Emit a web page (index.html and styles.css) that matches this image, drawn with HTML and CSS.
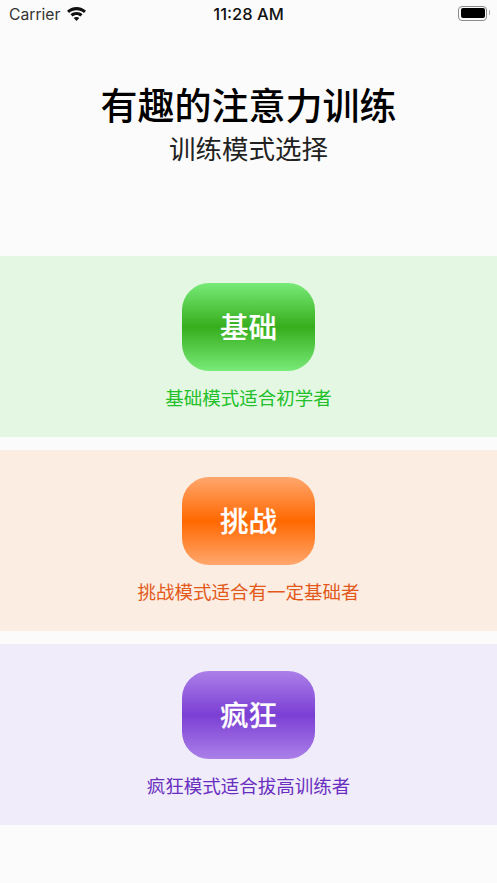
FILE: index.html
```html
<!DOCTYPE html>
<html lang="zh-CN">
<head>
  <meta charset="UTF-8" />
  <meta name="viewport" content="width=device-width, initial-scale=1.0" />
  <title>有趣的注意力训练</title>
  <link rel="stylesheet" href="styles.css">
</head>

<body>
  <div class="status-bar">
    <div class="status-left">
      <span>Carrier</span>
      <svg class="wifi" viewBox="1.8 2.2 16.400 12" aria-hidden="true">
        <path d="M10 2.2c3.2 0 6 1.2 8.2 3.2l-1.800 1.900C14.700 5.800 12.500 4.900 10 4.900s-4.700 .9-6.400 2.400L1.800 5.400C4 3.400 6.800 2.200 10 2.200z"/>
        <path d="M10 6.400c2 0 3.800 .7 5.200 2l-1.800 1.900c-.9-.8-2.100-1.300-3.400-1.300s-2.500 .5-3.400 1.300L4.800 8.400c1.400-1.300 3.200-2 5.200-2z"/>
        <path d="M10 10.700c1 0 1.800 .3 2.400 .9L10 14.200l-2.400-2.600c.6-.6 1.400-.9 2.400-.9z"/>
      </svg>
    </div>
    <span class="status-time">11:28 AM</span>
    <div class="battery"><div class="battery-fill"></div></div>
  </div>

  <header class="page-title">
    <h1>有趣的注意力训练</h1>
    <p>训练模式选择</p>
  </header>

  <section class="mode mode-basic">
    <button class="mode-btn">基础</button>
    <p>基础模式适合初学者</p>
  </section>

  <section class="mode mode-challenge">
    <button class="mode-btn">挑战</button>
    <p>挑战模式适合有一定基础者</p>
  </section>

  <section class="mode mode-crazy">
    <button class="mode-btn">疯狂</button>
    <p>疯狂模式适合拔高训练者</p>
  </section>
</body>
</html>
```

FILE: styles.css
```css
body {
  margin: 0;
  height: 883px;
  overflow: hidden;
  background-color: #fbfbfb;
  font-family: "Noto Sans CJK SC", "Noto Sans", sans-serif;
}

.status-bar {
  height: 28px;
  padding: 0 9px;
  display: flex;
  justify-content: space-between;
  align-items: center;
  position: relative;
  font-family: Inter, "Liberation Sans", sans-serif;
  font-size: 15.700px;
  color: #111;
}

.status-left {
  display: flex;
  align-items: center;
  gap: 7px;
  color: #333;
}

.wifi {
  width: 19px;
  height: 14px;
  fill: #111;
}

.status-time {
  position: absolute;
  left: 0;
  right: 0;
  text-align: center;
  font-size: 16.500px;
  font-weight: 500;
}

.battery {
  width: 29px;
  height: 15px;
  padding: 1.500px;
  margin-right: 1px;
  margin-bottom: 2px;
  border: 1px solid #8a8a8a;
  border-radius: 4px;
  box-sizing: border-box;
  position: relative;
}

.battery::after {
  content: "";
  position: absolute;
  right: -4px;
  top: 3px;
  width: 1.500px;
  height: 5px;
  background-color: #aaa;
  border-radius: 0 2px 2px 0;
}

.battery-fill {
  height: 100%;
  background-color: #000;
  border-radius: 2px;
}

.page-title {
  height: 228px;
  box-sizing: border-box;
  padding-top: 51px;
  text-align: center;
}

.page-title h1 {
  margin: 0;
  font-size: 37px;
  line-height: 50px;
  font-weight: 500;
  color: #000;
}

.page-title p {
  margin: 0;
  font-size: 26.500px;
  line-height: 38px;
  color: #222;
}

.mode {
  height: 181px;
  margin-bottom: 13px;
  padding-top: 27px;
  box-sizing: border-box;
  display: flex;
  flex-direction: column;
  align-items: center;
}

.mode p {
  margin: 13px 0 0;
  font-size: 18.500px;
  line-height: 26px;
}

.mode-btn {
  width: 133px;
  height: 88px;
  padding: 0 0 3px;
  border: none;
  border-radius: 27px;
  color: white;
  font-family: inherit;
  font-size: 28.500px;
  font-weight: 500;
  -webkit-text-stroke: 0.2px white;
}

.mode-basic {
  background-color: #e4f7e2;
}

.mode-basic p {
  color: #22c02a;
}

.mode-basic .mode-btn {
  background: linear-gradient(#78ea78, #36ae1c 50%, #78ea78);
}

.mode-challenge {
  background-color: #fcede3;
}

.mode-challenge p {
  color: #e2591a;
}

.mode-challenge .mode-btn {
  background: linear-gradient(#ffa76e, #ff6800 50%, #ffa76e);
}

.mode-crazy {
  background-color: #f0ecf9;
}

.mode-crazy p {
  color: #6a2fc0;
}

.mode-crazy .mode-btn {
  background: linear-gradient(#ab80e8, #7b3fd4 50%, #ab80e8);
}
```
